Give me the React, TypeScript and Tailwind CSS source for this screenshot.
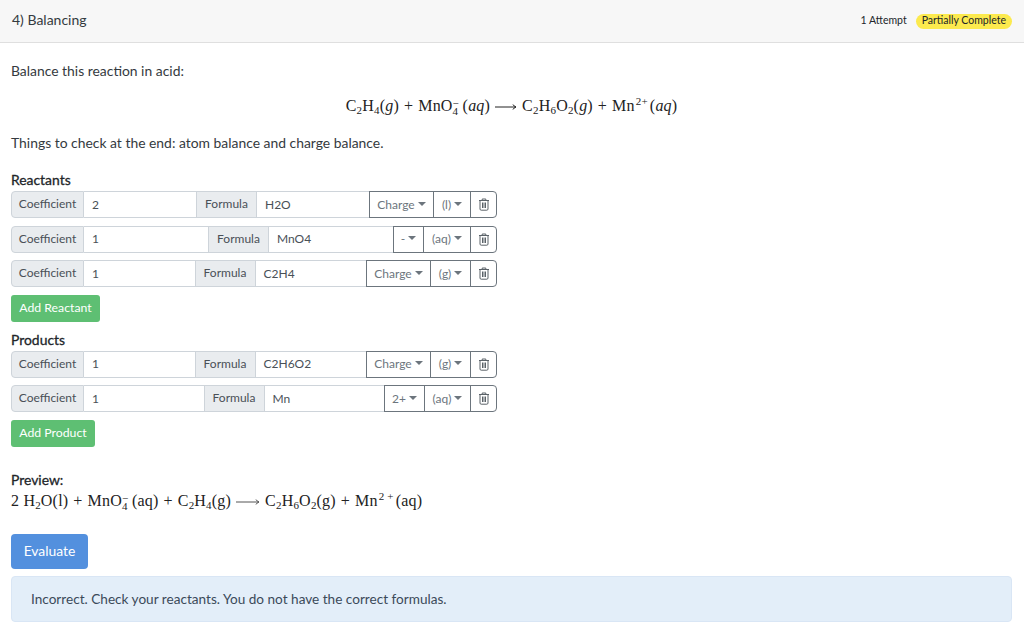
import { ReactNode } from 'react'

function Caret() {
  return <span className="ml-[3px] inline-block h-0 w-0 translate-y-[-1px] border-x-[4px] border-t-[4px] border-x-transparent border-t-[#6c757d]" />
}

function Trash() {
  return (
    <svg width="12" height="13" viewBox="0 0 12 13" fill="none" stroke="#5a6268" strokeWidth="1">
      <path d="M1 2.5h10M4.2 2.5V1h3.6v1.5M2 2.5V11a1.2 1.2 0 0 0 1.2 1.2h5.6A1.2 1.2 0 0 0 10 11V2.5M4.5 4.5v5.5M6 4.5v5.5M7.5 4.5v5.5" />
    </svg>
  )
}

function Addon({ children, w }: { children: ReactNode; w: string }) {
  return (
    <span className={`flex shrink-0 items-center justify-center border border-[#ced4da] bg-[#e9ecef] pb-[1px] text-[#495057] ${w}`}>
      {children}
    </span>
  )
}

interface RowProps {
  coef: string
  formula: string
  charge: string
  state: string
  chargeW: string
  stateW: string
}

function SpeciesRow({ coef, formula, charge, state, chargeW, stateW }: RowProps) {
  return (
    <div className="mb-[7.6px] flex h-[27px] w-[486px] text-[12px] text-[#495057]">
      <Addon w="w-[73px] rounded-l-[4px]">Coefficient</Addon>
      <span className="flex min-w-0 flex-1 items-center border-y border-[#ced4da] bg-white pl-[8px]">{coef}</span>
      <Addon w="w-[61px]">Formula</Addon>
      <span className="flex min-w-0 flex-1 items-center border-y border-[#ced4da] bg-white pl-[8px]">{formula}</span>
      <button className={`flex shrink-0 items-center justify-center border border-[#6c757d] text-[#6c757d] ${chargeW}`}>
        {charge}
        <Caret />
      </button>
      <button className={`-ml-px flex shrink-0 items-center justify-center border border-[#6c757d] text-[#6c757d] ${stateW}`}>
        {state}
        <Caret />
      </button>
      <button className="-ml-px flex w-[27px] shrink-0 items-center justify-center rounded-r-[4px] border border-[#6c757d]">
        <Trash />
      </button>
    </div>
  )
}

function Sb({ children }: { children: ReactNode }) {
  return <sub className="relative bottom-[-3px] align-baseline text-[11px] leading-none">{children}</sub>
}

function Sp({ children }: { children: ReactNode }) {
  return <sup className="relative top-[-6px] ml-[1px] mr-[2px] align-baseline text-[11px] leading-none">{children}</sup>
}

// stacked charge over count, as in MnO4-
function Ion({ sup, sub }: { sup: string; sub: string }) {
  return (
    <span className="relative mr-[3px] inline-block h-0 w-[7px]">
      <span className="absolute bottom-[4px] left-0 text-[11px] leading-[8px]">{sup}</span>
      <span className="absolute left-0 top-[-4px] text-[11px] leading-[8px]">{sub}</span>
    </span>
  )
}

function Plus() {
  return <span className="mx-[5px]">+</span>
}

function Arrow({ w, color }: { w: number; color: string }) {
  return (
    <svg width={w} height="10" viewBox={`0 0 ${w} 10`} className="mx-[5px] inline-block" fill="none" stroke={color} strokeWidth="1">
      <path d={`M0 5h${w - 1}M${w - 4} 2.5c.6 1.2 1.6 2 3 2.5c-1.4.5-2.4 1.3-3 2.5`} />
    </svg>
  )
}

export default function App() {
  return (
    <div className="h-[622px] w-[1024px] overflow-hidden bg-white font-['Lato',sans-serif] text-[13.9px] text-[#343a40]">
      <div className="flex h-[43px] items-center justify-between border-b border-[#dfdfdf] bg-[#f7f7f7] pb-[4px] pl-[12px] pr-[12px]">
        <span className="text-[14px]">4) Balancing</span>
        <div className="flex items-center gap-[9px] pt-[4px] text-[10.5px] text-[#212529]">
          <span>1 Attempt</span>
          <span className="flex h-[15px] items-center rounded-full bg-[#fcea4e] px-[6px]">Partially Complete</span>
        </div>
      </div>

      <div className="pl-[11px] pr-[12px]">
        <p className="mt-[19px] leading-[18px]">Balance this reaction in acid:</p>
        <div className="mt-[15px] flex h-[22px] items-center justify-center font-['Liberation_Serif',serif] text-[16px] tracking-[0.2px] text-[#222]">
          <span>
            C<Sb>2</Sb>H<Sb>4</Sb>(<i>g</i>)<Plus />MnO<Ion sup="−" sub="4" />(<i>aq</i>)
            <Arrow w={22} color="#222" />
            C<Sb>2</Sb>H<Sb>6</Sb>O<Sb>2</Sb>(<i>g</i>)<Plus />Mn<Sp>2+</Sp>(<i>aq</i>)
          </span>
        </div>
        <p className="mt-[17px] leading-[18px]">Things to check at the end: atom balance and charge balance.</p>

        <h6 className="mb-[2px] mt-[19px] leading-[18px] text-[#212529] [-webkit-text-stroke:0.3px_#212529]">Reactants</h6>
        <SpeciesRow coef="2" formula="H2O" charge="Charge" state="(l)" chargeW="w-[65px]" stateW="w-[38px]" />
        <SpeciesRow coef="1" formula="MnO4" charge="-" state="(aq)" chargeW="w-[31px]" stateW="w-[48px]" />
        <SpeciesRow coef="1" formula="C2H4" charge="Charge" state="(g)" chargeW="w-[65px]" stateW="w-[41px]" />
        <button className="h-[27px] w-[89px] rounded-[3px] bg-[#5ebf73] text-[12.25px] text-white">Add Reactant</button>

        <h6 className="mb-[2px] mt-[9px] leading-[18px] text-[#212529] [-webkit-text-stroke:0.3px_#212529]">Products</h6>
        <SpeciesRow coef="1" formula="C2H6O2" charge="Charge" state="(g)" chargeW="w-[65px]" stateW="w-[41px]" />
        <SpeciesRow coef="1" formula="Mn" charge="2+" state="(aq)" chargeW="w-[41px]" stateW="w-[47px]" />
        <button className="h-[27px] w-[84px] rounded-[3px] bg-[#5ebf73] text-[12.25px] text-white">Add Product</button>

        <h6 className="mt-[24px] leading-[18px] text-[#212529] [-webkit-text-stroke:0.3px_#212529]">Preview:</h6>
        <div className="mt-[1px] flex h-[22px] items-center whitespace-nowrap font-['Liberation_Serif',serif] text-[16px] tracking-[0.2px] text-[#222]">
          <span>
            2 H<Sb>2</Sb>O(l)<Plus />MnO<Ion sup="−" sub="4" />(aq)<Plus />C<Sb>2</Sb>H<Sb>4</Sb>(g)
            <Arrow w={24} color="#555" />
            C<Sb>2</Sb>H<Sb>6</Sb>O<Sb>2</Sb>(g)<Plus />Mn<Sp>2 +</Sp>(aq)
          </span>
        </div>

        <button className="mt-[22px] block h-[35px] w-[77px] rounded-[4px] bg-[#5390de] pb-[1px] text-white">Evaluate</button>
        <div className="mt-[7px] flex h-[46px] items-center rounded-[4px] border border-[#d9e6f5] bg-[#e3eef9] pl-[19px] text-[13.6px] text-[#3b4a5a]">
          Incorrect. Check your reactants. You do not have the correct formulas.
        </div>
      </div>
    </div>
  )
}
